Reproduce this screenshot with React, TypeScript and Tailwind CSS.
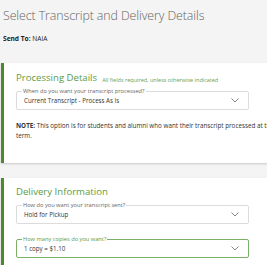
import React from "react";

const Chevron = () => (
  <svg width="8" height="5" viewBox="0 0 8 5" className="shrink-0">
    <path d="M0.5 0.5 L4 4 L7.5 0.5" fill="none" stroke="#777" strokeWidth="0.9" />
  </svg>
);

const Select = ({ label, value, active }: { label: string; value: string; active?: boolean }) => (
  <div
    className={`relative h-[19px] w-[233px] rounded-[2px] bg-white flex items-center justify-between pl-[7px] pr-[9px] ${
      active ? "border-[1.5px] border-[#7bb068]" : "border border-[#dcdcdc]"
    }`}
  >
    <span
      className={`absolute left-[5px] top-[-4px] bg-white px-[1px] text-[5.7px] leading-[6px] whitespace-nowrap ${
        active ? "text-[#5d9a47]" : "text-[#666]"
      }`}
    >
      {label}
    </span>
    <span className="text-[6.2px] text-[#333] mt-[1px]">{value}</span>
    <Chevron />
  </div>
);

export default function App() {
  return (
    <div
      className="w-[267px] h-[265px] overflow-hidden bg-[#f4f4f4] relative"
      style={{ fontFamily: '"Open Sans", sans-serif' }}
    >
      <div className="pl-[3px] pt-[7px]">
        <div className="text-[12.4px] leading-[18px] text-[#646464] font-light tracking-[-0.1px] whitespace-nowrap">
          Select Transcript and Delivery Details
        </div>
        <div className="mt-[9px] text-[6.6px] leading-[9px] text-[#222]">
          <span className="font-bold">Send To:</span> NAIA
        </div>
      </div>

      <div className="ml-[1px] mt-[20px] w-[300px] h-[100px] bg-white border-l-[3px] border-[#4b8b2e] shadow-[0_1px_2px_rgba(0,0,0,0.18)] pl-[12px] pt-[9px]">
        <div className="flex items-end whitespace-nowrap">
          <span className="text-[9.6px] leading-[12px] text-[#5e9b45]">Processing Details</span>
          <span className="ml-[5px] text-[5.5px] leading-[8px] text-[#6aa052]">
            All fields required, unless otherwise indicated
          </span>
        </div>
        <div className="mt-[7px]">
          <Select label="When do you want your transcript processed?" value="Current Transcript - Process As Is" />
        </div>
        <div className="mt-[11px] text-[6.3px] leading-[10px] text-[#333] whitespace-nowrap">
          <span className="font-bold">NOTE:</span> This option is for students and alumni who want their transcript processed at the end of the current
          <br />
          term.
        </div>
      </div>

      <div className="ml-[1px] mt-[15px] w-[300px] h-[100px] bg-white border-l-[3px] border-[#4b8b2e] shadow-[0_1px_2px_rgba(0,0,0,0.18)] pl-[12px] pt-[8px]">
        <div className="text-[9.6px] leading-[12px] text-[#5e9b45] whitespace-nowrap">Delivery Information</div>
        <div className="mt-[7px]">
          <Select label="How do you want your transcript sent?" value="Hold for Pickup" />
        </div>
        <div className="mt-[15px]">
          <Select label="How many copies do you want?" value="1 copy = $1.10" active />
        </div>
      </div>
    </div>
  );
}
